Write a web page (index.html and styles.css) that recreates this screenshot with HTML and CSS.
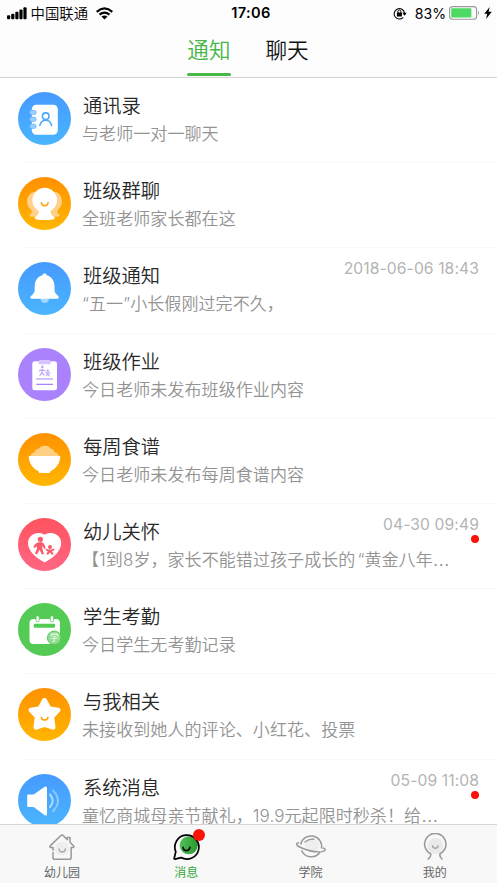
FILE: index.html
```html
<!DOCTYPE html>
<html lang="zh-CN">
<head>
<meta charset="utf-8">
<title>通知</title>
<link rel="stylesheet" href="styles.css">
</head>
<body>
<div class="app">
  <header class="header">
    <div class="status">
      <div class="status-left">
        <svg class="signal" width="20" height="13" viewBox="0 0 20 13"><rect x="0" y="8.3" width="3.2" height="4" rx="1"/><rect x="4.2" y="6.8" width="3.2" height="5.5" rx="1"/><rect x="8.3" y="4.8" width="3.2" height="7.5" rx="1"/><rect x="12.4" y="2.6" width="3.2" height="9.7" rx="1"/><rect x="16.4" y="0.2" width="3.2" height="12.1" rx="1"/></svg>
        <span class="carrier">中国联通</span>
        <svg class="wifi" width="17" height="13" viewBox="0 0 17 13"><path d="M.7 4.800Q8.500-2 16.300 4.800M3.500 7.700Q8.500 3.600 13.500 7.700" fill="none" stroke="#000" stroke-width="2.200"/><path d="M5.500 9.600Q8.500 7.300 11.500 9.600L8.500 12.400Z"/></svg>
      </div>
      <span class="clock">17:06</span>
      <div class="status-right">
        <svg width="14" height="13" viewBox="0 0 14 13"><path d="M10.200 10.300A5.200 5.200 0 1 1 11.500 6" fill="none" stroke="#000" stroke-width="1.100"/><path d="M9.300 5.800H13.700L11.500 8.700Z"/><rect x="3.900" y="5.500" width="5" height="4" rx=".5"/><path d="M4.900 6V4.500a1.500 1.500 0 0 1 3 0V6" fill="none" stroke="#000"/></svg>
        <span class="percent">83%</span>
        <svg width="31" height="14" viewBox="0 0 31 14"><rect x=".6" y=".6" width="27" height="12.600" rx="3" fill="#fff" stroke="#999" stroke-width="1.100"/><rect x="2.200" y="2.200" width="20.200" height="9.400" rx="1.200" fill="#4cd964"/><path d="M29 4.700q2 2.200 0 4.400z" fill="#999"/></svg>
        <svg class="bolt" width="8" height="12" viewBox="0 0 8 12"><path d="M5.700 0 .2 6.800h3L2.100 12 7.800 4.800H4.600Z"/></svg>
      </div>
    </div>
    <nav class="tabs"><span class="tab tab-on">通知</span><span class="tab">聊天</span></nav>
  </header>

  <main class="list">
    <article class="row">
      <svg class="icon" viewBox="0 0 53 53"><defs><linearGradient id="blue" x2="0" y2="1"><stop stop-color="#469aff"/><stop offset="1" stop-color="#4ab5fd"/></linearGradient><linearGradient id="orange" x2="0" y2="1"><stop stop-color="#ff9100"/><stop offset="1" stop-color="#ffb600"/></linearGradient></defs>
        <circle cx="26.5" cy="26.5" r="26.5" fill="url(#blue)"/><rect x="13.8" y="12.7" width="26" height="30" rx="4.5" fill="#fff"/><g fill="#9acfff" stroke="#55a9fb" stroke-width=".6"><rect x="11.6" y="18.3" width="6.6" height="4.3" rx="2"/><rect x="11.6" y="25.1" width="6.6" height="4.3" rx="2"/><rect x="11.6" y="32.1" width="6.6" height="4.3" rx="2"/></g><g fill="none" stroke="#4ba7fb" stroke-width="1.6" stroke-linecap="round"><circle cx="27.7" cy="24.2" r="3.3"/><path d="M21.9 33.4Q23 28.3 27.7 28.3T33.5 33.4"/></g></svg>
      <div class="body"><div class="top"><h2>通讯录</h2></div><p>与老师一对一聊天</p></div>
    </article>
    <article class="row">
      <svg class="icon" viewBox="0 0 53 53"><circle cx="26.5" cy="26.5" r="26.5" fill="url(#orange)"/><g fill="#ffd18a"><path d="M20 15C13 14 9 19 9 25q0 4.500 4.500 8.200Q14.500 36 11.700 37.700q-1 1.800 2 2H22z"/><path d="M33.400 15C40.400 14 44 19 44 25q0 4.500-4.500 8.200Q38.500 36 41.300 37.700q1 1.800-2 2H31z"/></g><path d="M26.700 10.800A12.300 12.300 0 0 0 14.400 23.100c0 4.800 2.500 8.700 6.800 11.300q-.7 3.200-3.900 5.700c-1.300 1.300-.8 1.900 1.300 2.300q8.100 1 16.200 0c2.100-.4 2.600-1 1.300-2.300q-3.200-2.500-3.900-5.700c4.300-2.600 6.800-6.500 6.800-11.300A12.300 12.300 0 0 0 26.700 10.800Z" fill="#fff"/><path d="M23.300 25.800q.3 3 3.400 3t3.400-3" fill="none" stroke="#ffa000" stroke-width="1.500" stroke-linecap="round"/></svg>
      <div class="body"><div class="top"><h2>班级群聊</h2></div><p>全班老师家长都在这</p></div>
    </article>
    <article class="row">
      <svg class="icon" viewBox="0 0 53 53"><circle cx="26.500" cy="26.500" r="26.500" fill="url(#blue)"/><path d="M22.600 36h8.200v.800a4.100 4.100 0 0 1-8.200 0z" fill="#a6d7ff"/><path d="M26.600 11.500c-1.200 0-2 .6-2 1.700-5 1.300-7.900 5.600-7.900 10.800v4c0 2.200-1 3.700-2.900 5.200-2.200 1.700-1.600 3.600.5 3.600h24.600c2.100 0 2.700-1.900.5-3.600-1.900-1.500-2.900-3-2.900-5.200v-4c0-5.200-2.900-9.500-7.900-10.800 0-1.100-.8-1.700-2-1.700Z" fill="#fff"/></svg>
      <div class="body"><div class="top"><h2>班级通知</h2><time>2018-06-06 18:43</time></div><p>“五一”小长假刚过完不久，</p></div>
    </article>
    <article class="row">
      <svg class="icon" viewBox="0 0 53 53"><circle cx="26.500" cy="26.500" r="26.500" fill="#aa82fc"/><rect x="14.300" y="13.200" width="24.700" height="29" rx="2.500" fill="#fff"/><rect x="20.500" y="12" width="12.300" height="4.200" rx="1.500" fill="#d6c3ff"/><g stroke="#aa82fc" stroke-width="1.200"><path d="M18.300 31H35M18.300 36.300H35"/></g><g stroke="#c5a9fa" stroke-width="1.300" stroke-linecap="round" stroke-linejoin="round" fill="none"><circle cx="24.300" cy="19" r=".8"/><path d="M21.300 22.800l2.700-1.200 3 1.200M24 21.800v2.500l-2 3M24 24.300l2 2.800"/><circle cx="29.800" cy="22.800" r=".6"/><path d="M27.800 24.800l2 .3 2-.3M29.800 25l-1.200 2.700M29.800 25l1.300 2.700"/></g></svg>
      <div class="body"><div class="top"><h2>班级作业</h2></div><p>今日老师未发布班级作业内容</p></div>
    </article>
    <article class="row">
      <svg class="icon" viewBox="0 0 53 53"><circle cx="26.500" cy="26.500" r="26.500" fill="url(#orange)"/><path d="M12.300 23.500q.4-3.500 4-3.900.4-3.400 4.200-3.800Q23 12.400 26.800 12.700q4-.2 5.900 2.900 3.400.6 3.900 3.700 3.700.7 4.400 4.200z" fill="#ffd083"/><path d="M10.700 23H42.300c0 6.500-3.800 12.400-9.300 14.900q-1 .5-1.200 2H21.200q-.2-1.500-1.200-2c-5.500-2.500-9.300-8.400-9.300-14.900Z" fill="#fff"/></svg>
      <div class="body"><div class="top"><h2>每周食谱</h2></div><p>今日老师未发布每周食谱内容</p></div>
    </article>
    <article class="row">
      <svg class="icon" viewBox="0 0 53 53"><defs><linearGradient id="pink" x2="0" y2="1"><stop stop-color="#ff535f"/><stop offset="1" stop-color="#ff6683"/></linearGradient></defs><circle cx="26.500" cy="26.500" r="26.500" fill="url(#pink)"/><path d="M26.600 16.700C22 13.500 15.500 14.700 12 19c-4 5.500-1.300 12 2.500 16.500 3.500 4 7.500 6.500 12.100 9 4.600-2.500 8.600-5 12.100-9 3.800-4.500 6.500-11 2.500-16.500-3.500-4.300-10-5.500-14.600-2.300Z" fill="#fff"/><g fill="#f95b6c"><circle cx="22.400" cy="21.300" r="2.600"/><path d="M20.500 24.200h3.600q3 1.700 3.400 6.200l-1.300.6-1.800-3.500-.1 3.200 1.700 5.400-2 .4-2.500-4.800-2.600 4.700-2-.8 2.200-5.200-.5-2.200-1.700 1.800-1.600-.8q1.500-3.900 5.200-5z"/><circle cx="32" cy="29" r="2"/><path d="M28 30.700l2.500.7h3l2.500-.8.600 1.300-2.500 1.400 1.500 3.100-1.900.4-1.700-2.300-1.900 2.300-1.700-.6 1.400-3-2.400-1.200z"/></g></svg>
      <div class="body"><div class="top"><h2>幼儿关怀</h2><time>04-30 09:49</time></div><p>【1到8岁，家长不能错过孩子成长的<span class="quote">“</span>黄金八年<span class="more">…</span></p><i class="dot"></i></div>
    </article>
    <article class="row">
      <svg class="icon" viewBox="0 0 53 53"><circle cx="26.500" cy="26.500" r="26.500" fill="#54cb55"/><rect x="11.500" y="16" width="30.400" height="25" rx="4" fill="#fff"/><rect x="15.700" y="20.800" width="21.300" height="4" rx="1.300" fill="#54cb55"/><g fill="#fff" stroke="#54cb55" stroke-width=".8"><rect x="18" y="12.800" width="3.200" height="6" rx="1.500"/><rect x="32.300" y="12.800" width="3.200" height="6" rx="1.500"/></g><circle cx="36.200" cy="34.800" r="6.800" fill="#8fdc8e" stroke="#54cb55" stroke-width="1"/><text x="36.200" y="38.200" text-anchor="middle" class="stamp">学</text></svg>
      <div class="body"><div class="top"><h2>学生考勤</h2></div><p>今日学生无考勤记录</p></div>
    </article>
    <article class="row">
      <svg class="icon" viewBox="0 0 53 53"><circle cx="26.500" cy="26.500" r="26.500" fill="url(#orange)"/><path d="M26.500 12.500l4.400 8.200 9.100 1.400-6.400 6.700 1.400 10.400-8.500-2.800-8.500 2.800 1.400-10.400-6.400-6.700 9.100-1.400Z" fill="#fff" stroke="#fff" stroke-width="5" stroke-linejoin="round"/><path d="M23.300 29.300q.3 2.700 3.300 2.700t3.300-2.700" fill="none" stroke="#ffa300" stroke-width="1.500" stroke-linecap="round"/></svg>
      <div class="body"><div class="top"><h2>与我相关</h2></div><p>未接收到她人的评论、小红花、投票</p></div>
    </article>
    <article class="row">
      <svg class="icon" viewBox="0 0 53 53"><circle cx="26.500" cy="26.500" r="26.500" fill="url(#blue)"/><path d="M10.500 20.500h5.200L26.700 12.700Q29 11.700 29 14v26q0 2.200-2.300 1.200L15.700 33h-5.200Q9.200 33 9.200 31.700v-9.900q0-1.300 1.300-1.300Z" fill="#fff"/><g fill="none" stroke-linecap="round" stroke-width="2"><path d="M32 20.500q5.300 6 0 12.500" stroke="#b1dcff"/><path d="M35 16.500q10 10.200 0 20.700" stroke="#8cc8ff"/></g></svg>
      <div class="body"><div class="top"><h2>系统消息</h2><time>05-09 11:08</time></div><p>童忆商城母亲节献礼，19.9元起限时秒杀！给<span class="more">…</span></p><i class="dot"></i></div>
    </article>
  </main>

  <nav class="bar">
    <div class="item">
      <svg width="32" height="28" viewBox="0 0 32 28"><circle cx="16" cy="15.500" r="7" fill="#eee"/><path d="M7 19.500v5q0 1.800 1.800 1.800h14.500q1.800 0 1.800-1.800V14.500h1.700q2-.2.600-1.800L24 9.300V4.500h-2.800V6.800L17.400 2.700q-1.400-1.300-2.800 0L4.400 12.600q-1.200 1.700.6 1.900H7v2.800" fill="none" stroke="#999" stroke-width="1.500" stroke-linejoin="round" stroke-linecap="round"/><path d="M13 16q.4 3 3.200 3t3.200-3" fill="none" stroke="#aaa" stroke-width="1.400" stroke-linecap="round"/></svg>
      <span>幼儿园</span>
    </div>
    <div class="item item-on">
      <svg width="32" height="28" viewBox="0 0 32 28"><defs><linearGradient id="leaf"><stop stop-color="#54bf5a"/><stop offset="1" stop-color="#299b2c"/></linearGradient></defs><circle cx="18.700" cy="12.300" r="9" fill="url(#leaf)"/><path d="M5.800 18.800A12 12 0 1 1 11 24.600L5 26.100Q3.800 26 4.300 24.800Z" fill="none" stroke="#000" stroke-width="1.700" stroke-linejoin="round"/><path d="M13 14.300q.4 3.300 3.400 3.300t3.500-3.300" fill="none" stroke="#000" stroke-width="1.600" stroke-linecap="round"/></svg>
      <i class="badge"></i>
      <span>消息</span>
    </div>
    <div class="item">
      <svg width="32" height="28" viewBox="0 0 32 28"><circle cx="17" cy="12.500" r="7.500" fill="#eee"/><path d="M5.700 11.500A10.500 10.500 0 0 1 26.500 15.500M24.900 19.300A10.500 10.500 0 0 1 6.500 17.200" fill="none" stroke="#999" stroke-width="1.500"/><path d="M3.500 9.800c-4 .8-1.500 3.300 3.300 5.200 6.500 2.700 14.300 4.400 20.300 3.600 3.800-.7 4-2.500 1.200-3.600M10 9q4.500-3.600 8.700-2.700" fill="none" stroke="#999" stroke-width="1.400" stroke-linecap="round"/></svg>
      <span>学院</span>
    </div>
    <div class="item">
      <svg width="32" height="28" viewBox="0 0 32 28"><circle cx="16.300" cy="12.800" r="8" fill="#eaeaea"/><path d="M9.300 26q3-2.300 2.300-5.300A10.700 10.700 0 1 1 21 20.700q-.7 3 2 5.300" fill="none" stroke="#999" stroke-width="1.600" stroke-linecap="round"/><path d="M13.500 12.700q.4 2.600 2.800 2.600t2.800-2.600" fill="none" stroke="#aaa" stroke-width="1.500" stroke-linecap="round"/></svg>
      <span>我的</span>
    </div>
  </nav>
</div>
</body>
</html>
```
FILE: styles.css
```css
* { box-sizing: border-box; }
body {
  margin: 0;
  background: #fff;
  font-family: Inter, "Noto Sans CJK SC", sans-serif;
  font-weight: 350;
  color: #222;
}
h2, p { margin: 0; font-weight: inherit; }
svg { display: block; flex: none; }
.app { display: flex; flex-direction: column; height: 883px; overflow: hidden; }

.header { flex: none; height: 78px; border-bottom: 1px solid #d4d4d4; background: #fdfdfd; }
.status {
  display: grid;
  grid-template-columns: 1fr auto 1fr;
  align-items: center;
  height: 25px;
  padding: 0 5px 0 7px;
  color: #000;
  line-height: 25px;
}
.status-left, .status-right { display: flex; align-items: center; }
.status-right { justify-content: flex-end; }
.carrier { margin: 0 8px 0 3.500px; font-size: 14.4px; }
.clock { padding-left: 3px; padding-top: 1px; font-size: 14.6px; font-weight: 600; letter-spacing: .4px; }
.percent { margin: 0 3px 0 8px; font-size: 14.1px; font-weight: 400; }
.bolt { margin-left: 4px; }

.tabs { display: flex; justify-content: center; gap: 35px; height: 51px; padding-right: 1px; }
.tab { position: relative; height: 51px; font-size: 21.6px; line-height: 50px; color: #111; }
.tab-on { color: #48b649; }
.tab-on::after { content: ""; position: absolute; left: 0; right: 0; bottom: .4px; height: 2.6px; border-radius: 2px; background: #48b649; }

.list { flex: 1; min-height: 0; overflow: hidden; }
.row {
  display: flex;
  height: 85.2px;
  padding: 14px 0 0 18px;
  background: linear-gradient(#f7f7f7, #f7f7f7) 24px 100% / 100% 1px no-repeat;
}
.icon { width: 53px; height: 53px; }
.body { position: relative; flex: 1; min-width: 0; margin-left: 11px; }
.top { display: flex; justify-content: space-between; height: 28px; padding: 0 18px 0 1px; }
h2 { font-size: 19.3px; line-height: 28px; color: #282828; white-space: nowrap; }
time { margin-top: -7px; font-size: 15.7px; font-weight: 400; line-height: 28px; color: #b4b4b4; letter-spacing: .08px; }
p { font-size: 17.05px; line-height: 28px; color: #939393; white-space: nowrap; letter-spacing: .05px; }
.quote { margin-left: 2px; }
.more { font-size: 20px; line-height: 1; }
.dot { position: absolute; right: 18px; top: 17px; width: 8px; height: 8px; border-radius: 50%; background: #fa1408; }
.stamp { font: 9px "Noto Sans CJK SC", sans-serif; fill: #fff; }

.bar { flex: none; display: grid; grid-template-columns: repeat(4, 1fr); height: 59px; border-top: 1px solid #d6d6d6; background: #f8f8f8; }
.item { position: relative; display: flex; flex-direction: column; align-items: center; padding-top: 8px; font-size: 12px; line-height: 18px; font-weight: 400; color: #666; }
.item span { margin-top: 3px; }
.item-on { color: #35a93b; }
.badge { position: absolute; left: calc(50% + 7px); top: 4px; width: 12px; height: 12px; border-radius: 50%; background: #fa1408; }
```
